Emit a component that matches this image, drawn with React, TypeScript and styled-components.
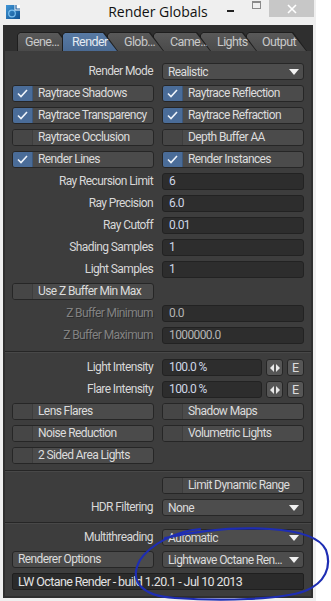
import React from 'react';
import styled, { createGlobalStyle, css } from 'styled-components';

const uiText = css`
  font-family: Roboto, "Liberation Sans", sans-serif;
  font-size: 12px;
  letter-spacing: -0.6px;
`;

const Global = createGlobalStyle`
  html, body { margin: 0; padding: 0; background: #ffffff; }
  body { font-family: Roboto, "Liberation Sans", sans-serif; }
  #root { width: 331px; height: 601px; }
`;

const Page = styled.div`
  position: relative;
  width: 331px;
  height: 601px;
  overflow: hidden;
  background: #ffffff;
`;

const Window = styled.div`
  box-sizing: border-box;
  width: 316px;
  height: 601px;
  background: #efefef;
  padding: 0 3px 3px 3px;
  display: flex;
  flex-direction: column;
`;

const TitleBar = styled.div`
  height: 25px;
  margin: 0 -3px;
  display: grid;
  grid-template-columns: 1fr auto 1fr;
  align-items: start;
`;

const IconSlot = styled.div`
  padding: 4px 0 0 6px;
  height: 14px;
`;

const Title = styled.div`
  font-family: "Open Sans", "Noto Sans", sans-serif;
  font-size: 14px;
  line-height: 23px;
  color: #111;
`;

const WinControls = styled.div`
  justify-self: end;
  display: flex;
  align-items: flex-start;
  padding-right: 2px;
`;

const WinButton = styled.div`
  width: 26px;
  height: 17px;
  display: flex;
  align-items: center;
  justify-content: center;
`;

const MinGlyph = styled.div`
  width: 7px;
  height: 2px;
  margin-top: 4px;
  background: #222;
`;

const MaxGlyph = styled.div`
  width: 7px;
  height: 5px;
  margin-top: -8px;
  border: 1px solid #8a8a8a;
  border-top-width: 2px;
`;

const CloseButton = styled.div`
  width: 45px;
  height: 17px;
  background: #c7c7c7;
  display: flex;
  align-items: center;
  justify-content: center;
`;

const Frame = styled.div`
  flex: 1;
  background: #2f2f2f;
  padding: 0 2px 2px 2px;
  display: flex;
  flex-direction: column;
`;

const TabStrip = styled.div`
  height: 26px;
  display: flex;
  align-items: flex-end;
  padding-left: 12px;
  box-sizing: border-box;
`;

const Tab = styled.div<{ $w: number; $z: number; $sel?: boolean; $pad: number; $first?: boolean }>`
  ${uiText};
  font-size: 12.5px;
  position: relative;
  z-index: ${(p) => p.$z};
  width: ${(p) => p.$w}px;
  height: 19px;
  margin-left: ${(p) => (p.$first ? 0 : -11)}px;
  box-sizing: border-box;
  background: #1e1e1e;
  clip-path: polygon(0 100%, 0 3px, 3px 0, calc(100% - 14px) 0, 100% 100%);
  line-height: 19px;
  color: ${(p) => (p.$sel ? '#e4eaf2' : '#c9c9c9')};
  padding-left: ${(p) => p.$pad}px;
  white-space: nowrap;
  &::before {
    content: '';
    position: absolute;
    inset: 1px 1px 0 1px;
    background: ${(p) =>
      p.$sel
        ? 'linear-gradient(#587aa4, #4a6a93)'
        : 'linear-gradient(#595959, #4a4a4a)'};
    clip-path: polygon(0 100%, 0 2px, 2px 0, calc(100% - 14px) 0, 100% 100%);
  }
  span { position: relative; }
`;

const Panel = styled.div`
  flex: 1;
  background: #3d3d3d;
  padding: 12px 7px 0 7px;
  display: flex;
  flex-direction: column;
`;

const Section = styled.div<{ $top: number; $bottom: number; $line?: boolean }>`
  display: flex;
  flex-direction: column;
  gap: 5px;
  margin: 0 -7px;
  padding: ${(p) => p.$top}px 7px ${(p) => p.$bottom}px 7px;
  border-top: ${(p) => (p.$line ? '1px solid #262626' : 'none')};
  box-shadow: ${(p) => (p.$line ? 'inset 0 1px 0 #484848' : 'none')};
`;

const Row = styled.div`
  display: grid;
  grid-template-columns: 142px 142px;
  column-gap: 8px;
  height: 17px;
`;

const Label = styled.div<{ $disabled?: boolean }>`
  ${uiText};
  text-align: right;
  padding-right: 1px;
  line-height: 17px;
  color: ${(p) => (p.$disabled ? '#828282' : '#d8d8d8')};
  text-shadow: ${(p) => (p.$disabled ? '1px 1px 0 #2c2c2c' : 'none')};
  white-space: nowrap;
`;

const Field = styled.div<{ $disabled?: boolean }>`
  ${uiText};
  box-sizing: border-box;
  height: 17px;
  background: #2d2d2d;
  border: 1px solid #222;
  border-radius: 3px;
  padding-left: 6px;
  line-height: 15px;
  color: ${(p) => (p.$disabled ? '#b4b4b4' : '#cdd6e6')};
  white-space: nowrap;
  overflow: hidden;
`;

const FieldGroup = styled.div`
  display: flex;
  gap: 4px;
  ${Field} { flex: 1; }
`;

const SmallButton = styled.div`
  ${uiText};
  font-size: 12.5px;
  letter-spacing: 0;
  box-sizing: border-box;
  width: 17px;
  height: 17px;
  background: #565656;
  border: 1px solid #262626;
  border-radius: 3px;
  display: flex;
  align-items: center;
  justify-content: center;
  color: #dddddd;
`;

const Dropdown = styled.div`
  ${uiText};
  box-sizing: border-box;
  height: 17px;
  background: #4d4d4d;
  border: 1px solid #272727;
  border-radius: 3px;
  padding: 0 4px 0 5px;
  display: flex;
  align-items: center;
  justify-content: space-between;
  color: #dcdcdc;
  white-space: nowrap;
`;

const ButtonBase = styled.div`
  ${uiText};
  box-sizing: border-box;
  height: 17px;
  background: #4b4b4b;
  border: 1px solid #262626;
  border-radius: 3px;
  line-height: 15px;
  color: #dcdcdc;
  white-space: nowrap;
  overflow: hidden;
`;

const CheckButton = styled(ButtonBase)`
  display: flex;
`;

const CheckBox = styled.div<{ $on?: boolean }>`
  width: 19px;
  flex: none;
  background: ${(p) => (p.$on ? '#4a6c98' : '#464646')};
  border-right: 1px solid ${(p) => (p.$on ? '#3c587c' : '#3d3d3d')};
  display: flex;
  align-items: center;
  justify-content: center;
`;

const CheckText = styled.div`
  padding-left: 5px;
`;

const PlainButton = styled(ButtonBase)`
  padding-left: 5px;
`;

const InfoBar = styled.div`
  ${uiText};
  font-size: 12.5px;
  box-sizing: border-box;
  height: 17px;
  background: #2b2b2b;
  border: 1px solid #1f1f1f;
  border-radius: 2px;
  padding-left: 5px;
  line-height: 15px;
  color: #e2e2e2;
  white-space: nowrap;
`;

const Annotation = styled.svg`
  position: absolute;
  left: 0;
  top: 0;
  pointer-events: none;
`;

const Check = () => (
  <svg width="11" height="9" viewBox="0 0 11 9">
    <polyline points="1,4.5 4,7.5 10,1" fill="none" stroke="#eef3fa" strokeWidth="1.6" />
  </svg>
);

const Arrow = () => (
  <svg width="10" height="6" viewBox="0 0 10 6">
    <polygon points="0,0 10,0 5,6" fill="#f2f2f2" />
  </svg>
);

const Arrows = () => (
  <svg width="10" height="8" viewBox="0 0 10 8">
    <polygon points="4,0 4,8 0,4" fill="#e8e8e8" />
    <polygon points="6,0 6,8 10,4" fill="#e8e8e8" />
  </svg>
);

const AppIcon = () => (
  <svg width="14" height="14" viewBox="0 0 14 14">
    <defs>
      <linearGradient id="ig" x1="0" y1="0" x2="1" y2="1">
        <stop offset="0" stopColor="#3f95d6" />
        <stop offset="1" stopColor="#0f4f8f" />
      </linearGradient>
    </defs>
    <rect x="0" y="0" width="14" height="14" fill="url(#ig)" />
    <circle cx="6" cy="8.5" r="3.3" fill="none" stroke="#7cc0f0" strokeWidth="1.2" />
    <rect x="8.5" y="0" width="5.5" height="5.5" fill="#ffffff" />
    <path d="M10 0 V4 H14" fill="none" stroke="#1d5e9e" strokeWidth="1.2" />
  </svg>
);

const CheckBtn = ({ on, children }: { on?: boolean; children: React.ReactNode }) => (
  <CheckButton>
    <CheckBox $on={on}>{on && <Check />}</CheckBox>
    <CheckText>{children}</CheckText>
  </CheckButton>
);

const Drop = ({ children }: { children: React.ReactNode }) => (
  <Dropdown>
    <span>{children}</span>
    <Arrow />
  </Dropdown>
);

const tabs = [
  { t: 'Gene…', w: 56, z: 6, pad: 8 },
  { t: 'Render', w: 56, z: 10, pad: 10, sel: true },
  { t: 'Glob…', w: 57, z: 5, pad: 17 },
  { t: 'Came…', w: 58, z: 4, pad: 17 },
  { t: 'Lights', w: 57, z: 3, pad: 17 },
  { t: 'Output', w: 61, z: 2, pad: 16 },
];

const numberRows: [string, string][] = [
  ['Ray Recursion Limit', '6'],
  ['Ray Precision', '6.0'],
  ['Ray Cutoff', '0.01'],
  ['Shading Samples', '1'],
  ['Light Samples', '1'],
];

export default function App() {
  return (
    <Page>
      <Global />
      <Window>
        <TitleBar>
          <IconSlot>
            <AppIcon />
          </IconSlot>
          <Title>Render Globals</Title>
          <WinControls>
            <WinButton>
              <MinGlyph />
            </WinButton>
            <WinButton>
              <MaxGlyph />
            </WinButton>
            <CloseButton>
              <svg width="10" height="10" viewBox="0 0 10 10">
                <path d="M1 1 L9 9 M9 1 L1 9" stroke="#ffffff" strokeWidth="1.6" />
              </svg>
            </CloseButton>
          </WinControls>
        </TitleBar>
        <Frame>
          <TabStrip>
            {tabs.map((t, i) => (
              <Tab key={t.t} $w={t.w} $z={t.z} $sel={t.sel} $pad={t.pad} $first={i === 0}>
                <span>{t.t}</span>
              </Tab>
            ))}
          </TabStrip>
          <Panel>
            <Section $top={0} $bottom={7}>
              <Row>
                <Label>Render Mode</Label>
                <Drop>Realistic</Drop>
              </Row>
              <Row>
                <CheckBtn on>Raytrace Shadows</CheckBtn>
                <CheckBtn on>Raytrace Reflection</CheckBtn>
              </Row>
              <Row>
                <CheckBtn on>Raytrace Transparency</CheckBtn>
                <CheckBtn on>Raytrace Refraction</CheckBtn>
              </Row>
              <Row>
                <CheckBtn>Raytrace Occlusion</CheckBtn>
                <CheckBtn>Depth Buffer AA</CheckBtn>
              </Row>
              <Row>
                <CheckBtn on>Render Lines</CheckBtn>
                <CheckBtn on>Render Instances</CheckBtn>
              </Row>
              {numberRows.map(([l, v]) => (
                <Row key={l}>
                  <Label>{l}</Label>
                  <Field>{v}</Field>
                </Row>
              ))}
              <Row>
                <CheckBtn>Use Z Buffer Min Max</CheckBtn>
              </Row>
              <Row>
                <Label $disabled>Z Buffer Minimum</Label>
                <Field $disabled>0.0</Field>
              </Row>
              <Row>
                <Label $disabled>Z Buffer Maximum</Label>
                <Field $disabled>1000000.0</Field>
              </Row>
            </Section>
            <Section $top={7} $bottom={6} $line>
              <Row>
                <Label>Light Intensity</Label>
                <FieldGroup>
                  <Field>100.0 %</Field>
                  <SmallButton>
                    <Arrows />
                  </SmallButton>
                  <SmallButton>E</SmallButton>
                </FieldGroup>
              </Row>
              <Row>
                <Label>Flare Intensity</Label>
                <FieldGroup>
                  <Field>100.0 %</Field>
                  <SmallButton>
                    <Arrows />
                  </SmallButton>
                  <SmallButton>E</SmallButton>
                </FieldGroup>
              </Row>
              <Row>
                <CheckBtn>Lens Flares</CheckBtn>
                <CheckBtn>Shadow Maps</CheckBtn>
              </Row>
              <Row>
                <CheckBtn>Noise Reduction</CheckBtn>
                <CheckBtn>Volumetric Lights</CheckBtn>
              </Row>
              <Row>
                <CheckBtn>2 Sided Area Lights</CheckBtn>
              </Row>
            </Section>
            <Section $top={6} $bottom={6} $line>
              <Row>
                <div />
                <CheckBtn>Limit Dynamic Range</CheckBtn>
              </Row>
              <Row>
                <Label>HDR Filtering</Label>
                <Drop>None</Drop>
              </Row>
            </Section>
            <Section $top={6} $bottom={0} $line>
              <Row>
                <Label>Multithreading</Label>
                <Drop>Automatic</Drop>
              </Row>
              <Row>
                <PlainButton>Renderer Options</PlainButton>
                <Drop>Lightwave Octane Ren…</Drop>
              </Row>
              <InfoBar>LW Octane Render - build 1.20.1 - Jul 10 2013</InfoBar>
            </Section>
          </Panel>
        </Frame>
      </Window>
      <Annotation width="331" height="601" viewBox="0 0 331 601">
        <path
          d="M 200 529 C 175 531, 150 545, 140 560 C 129 580, 140 596, 175 598 C 220 601, 280 600, 305 591 C 325 583, 332 567, 326 550 C 320 537, 300 531, 270 529 C 240 527, 205 529, 165 538"
          fill="none"
          stroke="#1e2db3"
          strokeWidth="2.2"
          strokeLinecap="round"
        />
      </Annotation>
    </Page>
  );
}
